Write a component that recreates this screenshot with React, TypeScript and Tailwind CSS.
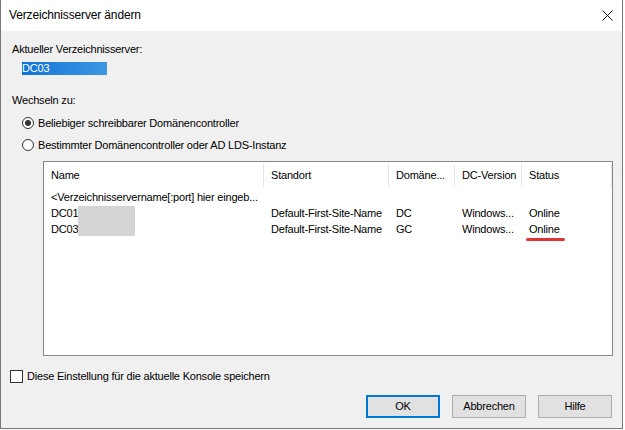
import React from "react";

const font = { fontFamily: '"Liberation Sans", Arial, sans-serif' };

function Radio({ checked }: { checked?: boolean }) {
  return (
    <span className="w-[12px] h-[12px] rounded-full border border-[#333] bg-white flex items-center justify-center shrink-0">
      {checked && <span className="w-[6px] h-[6px] rounded-full bg-[#333]" />}
    </span>
  );
}

const cols = [
  { label: "Name", w: "w-[220px]" },
  { label: "Standort", w: "w-[125px]" },
  { label: "Domäne...", w: "w-[66px]" },
  { label: "DC-Version", w: "w-[67px]" },
  { label: "Status", w: "w-[90px]" },
];

const rows = [
  ["DC01", "Default-First-Site-Name", "DC", "Windows...", "Online"],
  ["DC03", "Default-First-Site-Name", "GC", "Windows...", "Online"],
];

function Btn({ children, primary }: { children: React.ReactNode; primary?: boolean }) {
  return (
    <button
      className={
        "w-[74px] h-[23px] bg-[#e1e1e1] text-black " +
        (primary ? "border-2 border-[#0078d7]" : "border border-[#adadad]")
      }
    >
      {children}
    </button>
  );
}

export default function App() {
  return (
    <div
      className="w-[625px] h-[430px] bg-white text-black text-[11px] tracking-[-0.2px] leading-[15px] whitespace-nowrap"
      style={font}
    >
      <div className="w-[623px] h-[429px] flex flex-col border-x border-b border-[#777]">
        {/* Title bar */}
        <div className="h-[31px] bg-white flex items-center justify-between pl-[8px] pr-[9px] shrink-0">
          <span className="text-[12px] tracking-[-0.15px]">Verzeichnisserver ändern</span>
          <svg width="11" height="11" viewBox="0 0 11 11">
            <path d="M0.5 0.5L10.5 10.5M10.5 0.5L0.5 10.5" stroke="#111" strokeWidth="1" />
          </svg>
        </div>

        {/* Body */}
        <div className="flex-1 bg-[#f0f0f0] flex flex-col">
          <div className="ml-[11px] mt-[11px] h-[15px]">Aktueller Verzeichnisserver:</div>
          <div className="ml-[21px] mt-[5px] w-[85px] h-[13px] leading-[13px] text-white bg-gradient-to-r from-[#0a74d6] to-[#3d97e3]">
            DC03
          </div>
          <div className="ml-[11px] mt-[18px] h-[15px]">Wechseln zu:</div>

          <div className="ml-[21px] mt-[7px] h-[16px] flex items-center gap-[4px]">
            <Radio checked />
            <span>Beliebiger schreibbarer Domänencontroller</span>
          </div>
          <div className="ml-[21px] mt-[6px] h-[16px] flex items-center gap-[4px]">
            <Radio />
            <span>Bestimmter Domänencontroller oder AD LDS-Instanz</span>
          </div>

          {/* List view */}
          <div className="relative ml-[42px] mt-[8px] w-[570px] h-[195px] border border-[#828790] bg-white">
            <div className="flex h-[25px]">
              {cols.map((c) => (
                <div key={c.label} className={c.w + " flex items-center pl-[7px] pt-[1px]"}>
                  <div className="flex-1 h-[23px] flex items-center border-r border-[#e5e5e5] mt-[1px]">
                    {c.label}
                  </div>
                </div>
              ))}
            </div>
            <div className="mt-[2px] h-[16px] flex items-center pl-[7px]">
              &lt;Verzeichnisservername[:port] hier eingeb...
            </div>
            {rows.map((r, i) => (
              <div key={r[0]} className="h-[16px] flex items-center">
                {r.map((cell, j) => (
                  <div key={j} className={cols[j].w + " pl-[7px] relative overflow-visible"}>
                    {cell}
                    {i === 1 && j === 4 && (
                      <span className="absolute left-[4px] top-[16px] w-[39px] h-[3px] rounded-full bg-[#e03434]" />
                    )}
                  </div>
                ))}
              </div>
            ))}
            {/* redacted names */}
            <div className="absolute left-[34px] top-[44px] w-[57px] h-[30px] bg-[#d4d4d4]" />
          </div>

          <div className="ml-[9px] mt-[12px] h-[16px] flex items-center gap-[4px]">
            <span className="w-[13px] h-[13px] border border-[#333] bg-white shrink-0" />
            <span>Diese Einstellung für die aktuelle Konsole speichern</span>
          </div>

          <div className="mt-[11px] mr-[10px] flex justify-end gap-[12px]">
            <Btn primary>OK</Btn>
            <Btn>Abbrechen</Btn>
            <Btn>Hilfe</Btn>
          </div>
        </div>
      </div>
    </div>
  );
}
